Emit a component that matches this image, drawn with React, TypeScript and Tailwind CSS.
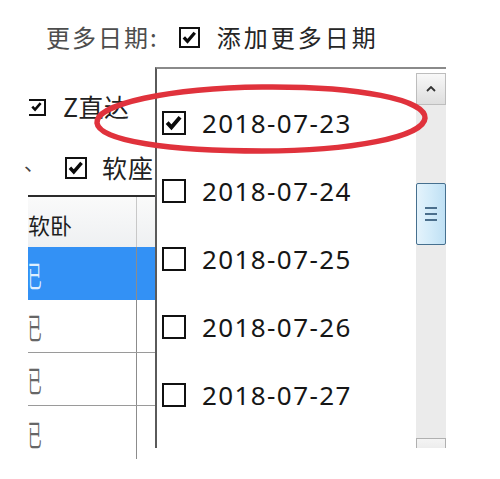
import React from "react";

const cjk = { fontFamily: '"Noto Sans CJK SC", "Noto Sans", sans-serif' };
const latin = { fontFamily: '"Noto Sans", "Noto Sans CJK SC", sans-serif' };

function Box({ checked, size = 22, noLeft = false }: { checked?: boolean; size?: number; noLeft?: boolean }) {
  return (
    <div
      className={
        "flex items-center justify-center border-2 border-[#111] bg-white shrink-0 " +
        (noLeft ? "border-l-0" : "")
      }
      style={{ width: size, height: size }}
    >
      {checked && (
        <svg viewBox="0 0 16 16" className="w-[86%] h-[86%]">
          <path d="M2 8 L6 12.4 L14 3" fill="none" stroke="#0a0a0a" strokeWidth="3.6" strokeLinecap="butt" />
        </svg>
      )}
    </div>
  );
}

const dates = ["2018-07-23", "2018-07-24", "2018-07-25", "2018-07-26", "2018-07-27"];

export default function App() {
  return (
    <div className="relative w-[500px] h-[479px] bg-white overflow-hidden text-[#222]" style={cjk}>
      {/* top row */}
      <div className="flex items-center h-[74px] pl-[46px]">
        <span className="text-[24px] tracking-[2px] text-[#4d4d4d]">更多日期:</span>
        <div className="ml-[20px]">
          <Box checked size={21} />
        </div>
        <span className="ml-[17px] text-[24px] tracking-[3px] text-[#262626]">添加更多日期</span>
      </div>

      {/* Z直达 */}
      <div className="flex items-center h-[66px] pl-[29px]">
        <Box checked size={17} noLeft />
        <span className="ml-[17px] text-[25px] tracking-[0.5px]">Z直达</span>
      </div>

      {/* 软座 */}
      <div className="flex items-center h-[55px] pl-[24px]">
        <span className="text-[20px] text-[#444] -mt-[10px]">、</span>
        <div className="ml-[21px]">
          <Box checked size={22} />
        </div>
        <span className="ml-[15px] text-[25px] tracking-[1px]">软座</span>
      </div>

      {/* table */}
      <div className="ml-[28px] w-[140px] h-[264px] overflow-hidden border-t-2 border-[#2b2b2b]">
        <div className="flex h-[50px] bg-gradient-to-b from-[#fafafa] to-[#eef0f2]">
          <div className="w-[109px] border-r border-[#c8c8c8] flex items-center pt-[4px]">
            <span className="text-[22px] text-[#1e1e1e]">软卧</span>
          </div>
          <div className="flex-1" />
        </div>
        {[0, 1, 2, 3].map((i) => (
          <div
            key={i}
            className={
              "flex h-[53px] " +
              (i === 0 ? "bg-[#3391f5] text-[#dfefff]" : "text-[#666] " + (i < 3 ? "border-b border-[#9a9a9a]" : ""))
            }
          >
            <div className="w-[109px] border-r border-[#8c8c8c] flex items-center">
              <span className="inline-block text-[30px] leading-none origin-left scale-x-[0.45]">已</span>
            </div>
            <div className="flex-1 flex items-center justify-end pr-[2px]">
              <span className={"text-[16px] " + (i === 0 ? "text-[#cfe5ff]" : "text-[#555]")}>-</span>
            </div>
          </div>
        ))}
      </div>

      {/* dropdown list */}
      <div className="absolute left-[155px] top-[67px] w-[291px] h-[381px] overflow-hidden bg-white border-t-2 border-l-2 border-t-[#8a8a8a] border-l-[#5a5a5a] flex">
        <div className="flex-1 pt-[20px] pl-[5px]">
          {dates.map((d, i) => (
            <div key={d} className="flex items-center h-[68px]">
              <Box checked={i === 0} size={24} />
              <span className="ml-[16px] text-[26px] tracking-[1.4px] text-[#161616]" style={latin}>
                {d}
              </span>
            </div>
          ))}
        </div>
        <div className="w-[30px] mt-[4px] flex flex-col shrink-0">
          <div className="h-[32px] shrink-0 border border-[#bdbdbd] bg-gradient-to-b from-[#f8f8f8] to-[#dedede] flex items-center justify-center">
            <svg viewBox="0 0 10 6" className="w-[10px] h-[6px]">
              <path d="M1 5 L5 1 L9 5" fill="none" stroke="#333" strokeWidth="1.8" />
            </svg>
          </div>
          <div className="h-[333px] shrink-0 bg-[#ebebeb] flex flex-col">
            <div className="mt-[78px] h-[62px] border border-[#46708f] rounded-[2px] bg-gradient-to-r from-[#e4f3fc] via-[#d2ebf9] to-[#bfe0f4] flex flex-col items-center justify-center gap-[4px]">
              <div className="w-[12px] h-[2px] bg-[#4b6f8c]" />
              <div className="w-[12px] h-[2px] bg-[#4b6f8c]" />
              <div className="w-[12px] h-[2px] bg-[#4b6f8c]" />
            </div>
          </div>
          <div className="h-[32px] shrink-0 border border-[#b0b0b0] bg-gradient-to-b from-[#f4f4f4] to-[#dcdcdc]" />
        </div>
      </div>

      {/* red annotation ellipse */}
      <svg className="absolute inset-0 pointer-events-none" width="500" height="479" viewBox="0 0 500 479">
        <path
          d="M 97 123 C 95 104, 170 88, 262 87 C 360 86, 426 100, 425 118 C 424 137, 350 151, 262 151 C 170 151, 99 141, 97 123 Z"
          fill="none"
          stroke="#e0323c"
          strokeWidth="5.5"
        />
      </svg>
    </div>
  );
}
